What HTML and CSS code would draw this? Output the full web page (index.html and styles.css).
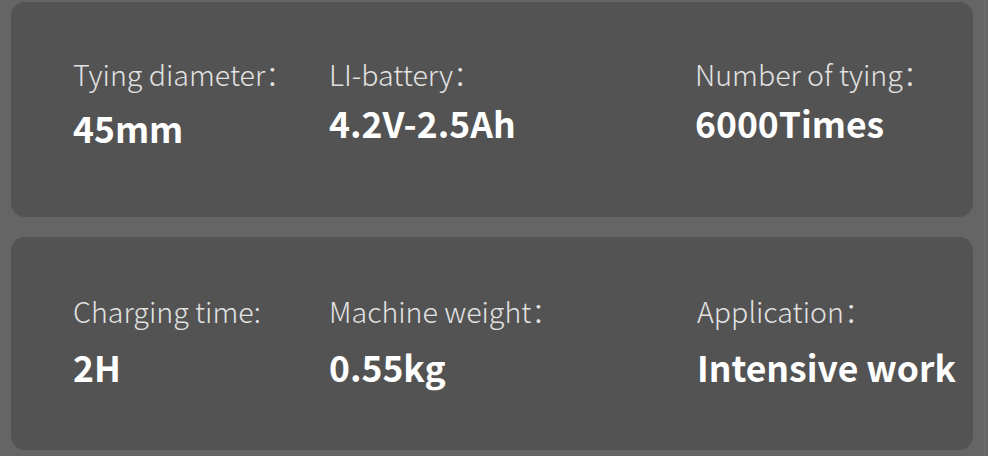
FILE: index.html
```html
<!DOCTYPE html>
<html lang="en">
<head>
<meta charset="utf-8">
<title>Specs</title>
<link rel="stylesheet" href="styles.css">
</head>
<body>
<main class="specs">
  <section class="card card-top">
    <div class="item">
      <div class="label">Tying diameter：</div>
      <div class="value value-low">45mm</div>
    </div>
    <div class="item">
      <div class="label">LI-battery：</div>
      <div class="value">4.2V-2.5Ah</div>
    </div>
    <div class="item">
      <div class="label">Number of tying：</div>
      <div class="value">6000Times</div>
    </div>
  </section>
  <section class="card card-bottom">
    <div class="item">
      <div class="label">Charging time:</div>
      <div class="value">2H</div>
    </div>
    <div class="item">
      <div class="label">Machine weight：</div>
      <div class="value">0.55kg</div>
    </div>
    <div class="item item-shift">
      <div class="label">Application：</div>
      <div class="value">Intensive work</div>
    </div>
  </section>
</main>
</body>
</html>
```
FILE: styles.css
```css
html, body {
  margin: 0;
  padding: 0;
}
body {
  background: linear-gradient(to right, #656565 0, #656565 984px, #6d6d6d 984px, #6d6d6d 985px, #666666 985px);
  width: 988px;
  height: 456px;
  overflow: hidden;
  font-family: "Noto Sans CJK SC", "Noto Sans", sans-serif;
}
.specs {
  display: flex;
  flex-direction: column;
  gap: 20px;
  padding: 2px 15px 0 11px;
}
.card {
  background: #535353;
  border-radius: 14px;
  display: grid;
  grid-template-columns: 256px 366px 1fr;
  padding-left: 62px;
  box-sizing: border-box;
}
.card-top {
  height: 215px;
  padding-top: 52px;
}
.card-bottom {
  height: 213px;
  padding-top: 54px;
}
.label {
  font-size: 28.6px;
  font-weight: 300;
  color: #e2e2e2;
  line-height: 40px;
  white-space: nowrap;
}
.value {
  font-size: 35.5px;
  font-weight: 700;
  color: #ffffff;
  line-height: 50px;
  white-space: nowrap;
}
.card-top .value {
  margin-top: 4px;
}
.card-top .value-low {
  margin-top: 9px;
}
.card-bottom .value {
  margin-top: 11px;
}
.item-shift {
  padding-left: 2px;
}
```
